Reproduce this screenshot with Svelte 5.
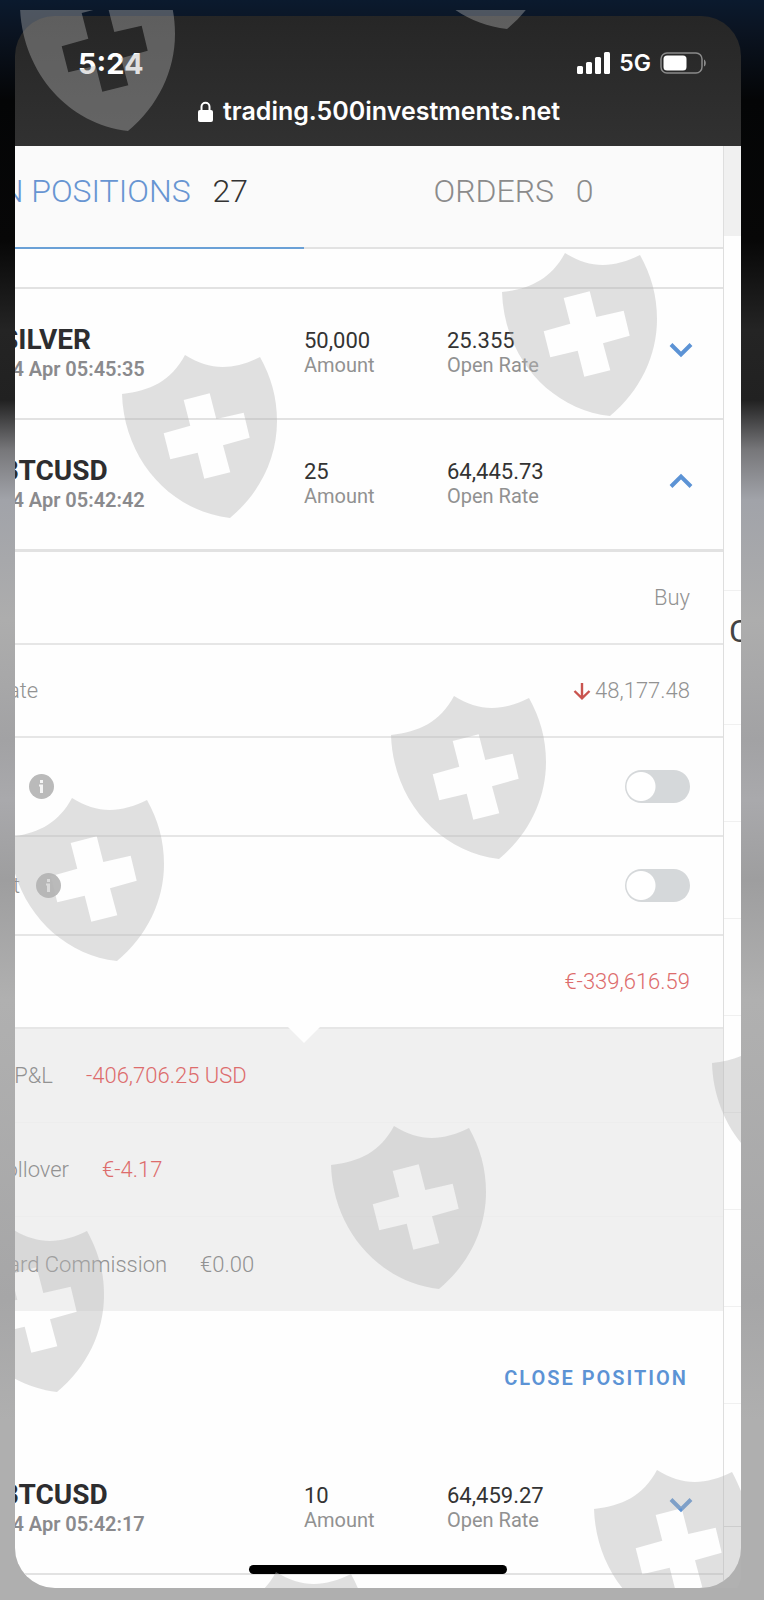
<script lang="ts">
  let openRow = 1;
  let stopLoss = false;
  let takeProfit = false;

  const positions = [
    { name: "SILVER", date: "14 Apr 05:45:35", amount: "50,000", rate: "25.355" },
    { name: "BTCUSD", date: "14 Apr 05:42:42", amount: "25", rate: "64,445.73" },
    { name: "BTCUSD", date: "14 Apr 05:42:17", amount: "10", rate: "64,459.27" },
  ];

  const breakdown = [
    { label: "Gross P&L", value: "-406,706.25 USD", loss: true },
    { label: "Net Rollover", value: "€-4.17", loss: true },
    { label: "Standard Commission", value: "€0.00", loss: false },
  ];

  // shields scattered over the screen
  const shields = [
    [5, -42], [384, -144], [487, 243], [107, 345], [376, 686], [-6, 788],
    [697, 1014], [316, 1116], [-66, 1219], [579, 1460], [198, 1562],
  ];

  function toggle(i: number) {
    openRow = openRow === i ? -1 : i;
  }
</script>

<div class="page">
  <div class="screen">
    <header>
      <div class="status">
        <span class="time">5:24</span>
        <div class="indicators">
          <svg width="33" height="22" viewBox="0 0 33 22" fill="#fff" aria-hidden="true">
            <rect x="0" y="14" width="6" height="8" rx="1.5" />
            <rect x="9" y="10" width="6" height="12" rx="1.5" />
            <rect x="18" y="5" width="6" height="17" rx="1.5" />
            <rect x="27" y="0" width="6" height="22" rx="1.5" />
          </svg>
          <span class="network">5G</span>
          <svg width="46" height="22" viewBox="0 0 46 22" aria-hidden="true">
            <rect x="1" y="1" width="41" height="20" rx="6" fill="none" stroke="#8b8b8b" stroke-width="1.5" />
            <rect x="3.5" y="3.5" width="23" height="15" rx="3.5" fill="#fff" />
            <path d="M44 7.5c2.4 1 2.4 6 0 7z" fill="#8b8b8b" />
          </svg>
        </div>
      </div>
      <div class="address">
        <svg width="15" height="21" viewBox="0 0 15 21" aria-hidden="true">
          <path d="M3.5 10V5.8a4 4 0 0 1 8 0V10" fill="none" stroke="#fff" stroke-width="2" />
          <rect x="0" y="9" width="15" height="12" rx="2" fill="#fff" />
        </svg>
        <span>trading.500investments.net</span>
      </div>
    </header>

    <div class="content">
      <main>
        <nav>
          <button class="tab active">OPEN POSITIONS <span>27</span></button>
          <button class="tab">ORDERS <span>0</span></button>
        </nav>
        <div class="spacer"></div>

        {#each positions as p, i}
          <section class="position" class:open={openRow === i}>
            <div class="name">
              <strong>{p.name}</strong>
              <span>{p.date}</span>
            </div>
            <div class="figure">
              <b>{p.amount}</b>
              <span>Amount</span>
            </div>
            <div class="figure">
              <b>{p.rate}</b>
              <span>Open Rate</span>
            </div>
            <button class="chevron" aria-label="Toggle details" on:click={() => toggle(i)}>
              <svg width="24" height="16" viewBox="0 0 24 16" fill="none" stroke="#5c93d5" stroke-width="4">
                {#if openRow === i}
                  <path d="M2 13.5 12 3.5 22 13.5" />
                {:else}
                  <path d="M2 2.5 12 12.5 22 2.5" />
                {/if}
              </svg>
            </button>
          </section>

          {#if openRow === i}
            <div class="detail">
              <span>Direction</span>
              <span class="value">Buy</span>
            </div>
            <div class="detail">
              <span>Current Rate</span>
              <span class="value">
                <svg width="18" height="18" viewBox="0 0 18 18" fill="none" stroke="#c9544f" stroke-width="2.4" aria-hidden="true">
                  <path d="M9 1V16M1.5 9 9 16.3 16.5 9" />
                </svg>
                48,177.48
              </span>
            </div>
            <div class="detail tall">
              <label for="stop-loss">Stop Loss</label>
              <svg class="info" width="25" height="25" viewBox="0 0 25 25" aria-hidden="true">
                <circle cx="12.5" cy="12.5" r="12.5" fill="#bababa" />
                <path d="M11 6h3v3h-3zM10 10.5h4V19h-3v-6.5h-1z" fill="#f4f4f4" />
              </svg>
              <input id="stop-loss" type="checkbox" bind:checked={stopLoss} />
            </div>
            <div class="detail tall">
              <label for="take-profit">Take Profit</label>
              <svg class="info" width="25" height="25" viewBox="0 0 25 25" aria-hidden="true">
                <circle cx="12.5" cy="12.5" r="12.5" fill="#bababa" />
                <path d="M11 6h3v3h-3zM10 10.5h4V19h-3v-6.5h-1z" fill="#f4f4f4" />
              </svg>
              <input id="take-profit" type="checkbox" bind:checked={takeProfit} />
            </div>
            <div class="detail">
              <span>Net P&amp;L</span>
              <span class="value loss">€-339,616.59</span>
            </div>
            <div class="breakdown">
              {#each breakdown as item}
                <div class="item">
                  <span>{item.label}</span>
                  <span class:loss={item.loss}>{item.value}</span>
                </div>
              {/each}
            </div>
            <div class="actions">
              <button>CLOSE POSITION</button>
            </div>
          {/if}
        {/each}
      </main>

      <aside>
        <div class="side-head"></div>
        <div class="side-gap"></div>
        <div class="side-title">C</div>
        {#each Array(7) as _}
          <div class="side-row"></div>
        {/each}
        <div class="side-last"></div>
      </aside>
    </div>
    <div class="home"></div>
  </div>

  <svg class="shields" aria-hidden="true">
    {#each shields as [x, y]}
      <path
        transform="translate({x} {y})"
        fill-rule="evenodd"
        d="M0 39C28 36 49 26 63 0C88 16 112 15 138 2C149 22 155 42 155 66C155 103 138 138 108 163C48 156 2 104 0 39Z
           M87.7 38.3 94.3 64 121.7 57.7 127.7 82.7 101 90.3 108.3 117.3 82.3 123.7 75.7 97.7 48.3 104.3 41.7 78.3 68.3 70.7 61.7 45Z"
      />
    {/each}
  </svg>
</div>

<style>
  :global(body) {
    margin: 0;
    font-family: Roboto, "Liberation Sans", sans-serif;
  }

  button {
    border: none;
    background: none;
    padding: 0;
    font-family: inherit;
    cursor: pointer;
  }

  .page {
    position: relative;
    padding: 16px 23px 12px 15px;
    background: linear-gradient(
      #0b1a2e 0,
      #0b1422 30px,
      #040506 100px,
      #070707 240px,
      #242424 330px,
      #212121 400px,
      #77777a 450px,
      #a1a3a9 500px,
      #adadad 620px,
      #a2a2a4 740px,
      #a9a9ac 800px,
      #9e9e9f 880px,
      #b0b0b0 1000px,
      #a6a6a7 1300px,
      #afafaf 1420px
    );
  }

  .screen {
    position: relative;
    overflow: hidden;
    border-radius: 40px;
  }

  header {
    box-sizing: border-box;
    height: 130px;
    padding: 31px 35px 0 63px;
    background: linear-gradient(#262626, #313131);
    color: #fff;
    font-family: Inter, "Liberation Sans", sans-serif;
  }

  .status {
    display: flex;
    justify-content: space-between;
    align-items: center;
    height: 32px;
  }

  .time {
    font-size: 29px;
    font-weight: 700;
  }

  .indicators {
    display: flex;
    align-items: center;
    gap: 9px;
  }

  .network {
    font-size: 23px;
    font-weight: 600;
  }

  .address {
    display: flex;
    justify-content: center;
    align-items: center;
    gap: 10px;
    height: 32px;
    margin: 16px -35px 0 -61px;
    font-size: 25px;
    font-weight: 600;
  }

  .content {
    display: flex;
    margin-left: -130px;
    background: #fefefe;
  }

  main {
    flex: 1;
    padding-bottom: 13px;
  }

  nav {
    display: flex;
    background: #fafafa;
  }

  .tab {
    flex: 1;
    box-sizing: border-box;
    height: 103px;
    padding-bottom: 12px;
    border-bottom: 2px solid #e2e2e2;
    color: #8b8b8b;
    font-size: 32px;
    font-weight: 300;
  }

  .tab span {
    margin-left: 14px;
  }

  .tab.active {
    border-color: #6aa0d6;
    color: #6795d2;
  }

  .tab.active span {
    color: #333;
  }

  .spacer {
    height: 38px;
    border-bottom: 2px solid #e2e2e2;
  }

  .position {
    display: grid;
    grid-template-columns: 50% 143px 1fr auto;
    align-items: center;
    box-sizing: border-box;
    height: 131px;
    border-bottom: 2px solid #e2e2e2;
  }

  .position.open {
    height: 132px;
    border-bottom-width: 3px;
  }

  .name {
    display: flex;
    flex-direction: column;
    padding-left: 116px;
  }

  .name strong {
    color: #2d2d2f;
    font-size: 28px;
    line-height: 30px;
  }

  .name span {
    color: #8a8a8d;
    font-size: 20px;
    font-weight: 600;
    line-height: 28px;
  }

  .figure {
    display: flex;
    flex-direction: column;
    padding-bottom: 2px;
    line-height: 24px;
  }

  .figure b {
    color: #333;
    font-size: 22px;
    font-weight: 400;
  }

  .figure span {
    color: #919191;
    font-size: 20px;
  }

  .chevron {
    height: 24px;
    margin: 0 30px 4px 0;
  }

  .detail {
    display: flex;
    align-items: center;
    box-sizing: border-box;
    height: 93px;
    padding: 0 33px 0 32px;
    border-bottom: 2px solid #e6e6e6;
    color: #929292;
    font-size: 22px;
    font-weight: 300;
  }

  .detail.tall {
    height: 99px;
  }

  .value {
    display: flex;
    align-items: center;
    gap: 4px;
  }

  .value,
  .detail input {
    margin-left: auto;
  }

  .info {
    margin-left: 16px;
  }

  .detail input {
    appearance: none;
    width: 65px;
    height: 33px;
    margin-block: 0;
    margin-right: 0;
    border-radius: 17px;
    background: radial-gradient(circle at 16px 50%, #fff 14px, transparent 15px) #d5d8da;
  }

  .detail input:checked {
    background: radial-gradient(circle at 49px 50%, #fff 14px, transparent 15px) #5c93d5;
  }

  .loss {
    color: #dd6c6c;
  }

  .breakdown {
    position: relative;
    background: #f0f0f0;
    color: #929292;
    font-size: 22px;
    font-weight: 300;
  }

  .breakdown::before {
    content: "";
    position: absolute;
    top: -2px;
    left: 50%;
    margin-left: -16px;
    border: 16px solid transparent;
    border-top-color: #fefefe;
    border-bottom: none;
  }

  .item {
    display: flex;
    align-items: center;
    gap: 33px;
    box-sizing: border-box;
    height: 94px;
    padding-left: 67px;
    border-bottom: 1px solid #ededed;
  }

  .item:last-child {
    border: none;
  }

  .actions {
    display: flex;
    justify-content: flex-end;
    align-items: center;
    height: 133px;
    padding-right: 35px;
  }

  .actions button {
    color: #5c93d5;
    font-size: 20px;
    font-weight: 600;
    letter-spacing: 2px;
  }

  aside {
    width: 17px;
    overflow: hidden;
    border-left: 1px solid #dedede;
  }

  .side-head {
    height: 90px;
    background: #f0f0f0;
  }

  .side-gap {
    height: 354px;
    border-bottom: 1px solid #f0f0f0;
  }

  .side-title {
    box-sizing: border-box;
    height: 134px;
    padding: 21px 0 0 5px;
    border-bottom: 1px solid #f0f0f0;
    color: #444;
    font-size: 32px;
  }

  .side-row {
    height: 96px;
    border-bottom: 1px solid #f0f0f0;
  }

  .side-last {
    height: 122px;
    border-bottom: 1px solid #dedede;
  }

  .home {
    position: absolute;
    bottom: 14px;
    left: 50%;
    width: 258px;
    height: 9px;
    margin-left: -129px;
    border-radius: 5px;
    background: #000;
  }

  .shields {
    position: absolute;
    top: 10px;
    left: 15px;
    width: calc(100% - 38px);
    height: calc(100% - 22px);
    overflow: hidden;
    fill: rgba(179, 179, 179, 0.4);
    pointer-events: none;
  }
</style>
